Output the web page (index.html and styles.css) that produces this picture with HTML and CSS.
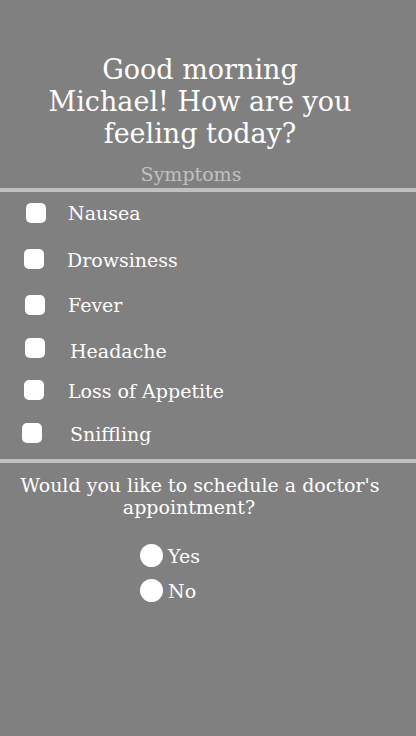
FILE: index.html
```html
<!DOCTYPE html>
<html>
<head>
<meta charset="utf-8">
<link rel="stylesheet" href="styles.css">
</head>
<body>
<div class="page">
  <h1 class="greeting">Good morning<br>Michael! How are you<br>feeling today?</h1>
  <div class="section-title">Symptoms</div>
  <div class="divider"></div>
  <ul class="symptoms">
    <li class="symptom s1"><span class="box"></span><span class="label">Nausea</span></li>
    <li class="symptom s2"><span class="box"></span><span class="label">Drowsiness</span></li>
    <li class="symptom s3"><span class="box"></span><span class="label">Fever</span></li>
    <li class="symptom s4"><span class="box"></span><span class="label">Headache</span></li>
    <li class="symptom s5"><span class="box"></span><span class="label">Loss of Appetite</span></li>
    <li class="symptom s6"><span class="box"></span><span class="label">Sniffling</span></li>
  </ul>
  <div class="divider"></div>
  <p class="question">Would you like to schedule a doctor's<br><span class="q2">appointment?</span></p>
  <div class="radios">
    <div class="radio"><span class="dot"></span><span class="rlabel">Yes</span></div>
    <div class="radio"><span class="dot"></span><span class="rlabel">No</span></div>
  </div>
</div>
</body>
</html>
```
FILE: styles.css
```css
html, body {
  margin: 0;
  padding: 0;
  background: #808080;
  height: 100%;
}
body {
  font-family: "DejaVu Serif", "Liberation Serif", serif;
  color: #ffffff;
}
.page {
  width: 416px;
  padding-top: 54px;
}
.greeting {
  margin: 0;
  width: 400px;
  text-align: center;
  font-size: 27px;
  font-weight: normal;
  line-height: 32px;
}
.section-title {
  width: 382px;
  text-align: center;
  color: #c0c0c0;
  font-size: 19px;
  line-height: 22px;
  margin-top: 13px;
}
.divider {
  height: 4px;
  background: #c0c0c0;
  margin-top: 3px;
}
.symptoms {
  list-style: none;
  margin: 0;
  padding: 0;
  padding-top: 10px;
}
.symptom {
  display: flex;
  align-items: center;
  height: 22px;
}
.box {
  width: 20px;
  height: 20px;
  background: #ffffff;
  border-radius: 5px;
}
.label {
  font-size: 19px;
}
.s1 { margin-bottom: 25px; }
.s2 { margin-bottom: 23px; }
.s3 { margin-bottom: 24px; }
.s4 { margin-bottom: 18px; }
.s5 { margin-bottom: 21px; }
.s6 { margin-bottom: 14px; }
.s1 .box { margin-left: 26px; }
.s1 .label { margin-left: 22px; }
.s2 .box { margin-left: 24px; margin-top: -3px; }
.s2 .label { margin-left: 23px; }
.s3 .box { margin-left: 25px; }
.s3 .label { margin-left: 23px; }
.s4 .box { margin-left: 25px; margin-top: -6px; }
.s4 .label { margin-left: 25px; }
.s5 .box { margin-left: 24px; margin-top: -2px; }
.s5 .label { margin-left: 24px; }
.s6 .box { margin-left: 22px; margin-top: -3px; }
.s6 .label { margin-left: 28px; }
.question {
  margin: 11px 0 0 0;
  width: 400px;
  text-align: center;
  font-size: 19px;
  line-height: 22px;
}
.q2 {
  margin-right: 22px;
}
.radios {
  display: flex;
  flex-direction: column;
  align-items: flex-start;
  padding-left: 140px;
  padding-top: 26px;
  gap: 12px;
}
.radio {
  display: flex;
  align-items: center;
}
.dot {
  width: 23px;
  height: 23px;
  border-radius: 50%;
  background: #ffffff;
}
.rlabel {
  font-size: 19px;
  margin-left: 5px;
}
```
